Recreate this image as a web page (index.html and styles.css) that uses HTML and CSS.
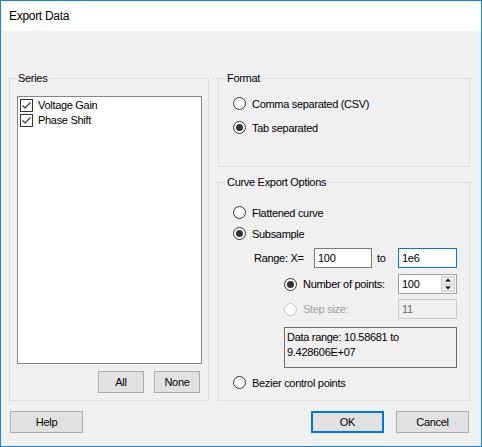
FILE: index.html
```html
<!DOCTYPE html>
<html lang="en">
<head>
    <meta charset="UTF-8">
    <title>Export Data</title>
    <link rel="stylesheet" href="styles.css">
</head>
<body>
<div class="window">
    <div class="titlebar">Export Data</div>

    <div class="content">
        <div class="groups">
            <!-- Series list -->
            <fieldset class="group series">
                <legend>Series</legend>
                <div class="series-body">
                    <div class="listbox">
                        <div class="item">
                            <span class="check"><svg width="11" height="11" viewBox="0 0 11 11"><polyline points="1.5,5.5 4,8 9.5,2.5" fill="none" stroke="#333" stroke-width="1.2"/></svg></span>
                            Voltage Gain
                        </div>
                        <div class="item">
                            <span class="check"><svg width="11" height="11" viewBox="0 0 11 11"><polyline points="1.5,5.5 4,8 9.5,2.5" fill="none" stroke="#333" stroke-width="1.2"/></svg></span>
                            Phase Shift
                        </div>
                    </div>
                    <div class="list-buttons">
                        <button class="btn small">All</button>
                        <button class="btn small">None</button>
                    </div>
                </div>
            </fieldset>

            <div class="right-col">
                <!-- Format -->
                <fieldset class="group format">
                    <legend>Format</legend>
                    <div class="format-body">
                        <div class="radio-row"><span class="radio"></span><span class="rlabel">Comma separated (CSV)</span></div>
                        <div class="radio-row gap8"><span class="radio on"></span><span class="rlabel">Tab separated</span></div>
                    </div>
                </fieldset>

                <!-- Curve export -->
                <fieldset class="group curve">
                    <legend>Curve Export Options</legend>
                    <div class="curve-body">
                        <div class="radio-row"><span class="radio"></span><span class="rlabel">Flattened curve</span></div>
                        <div class="radio-row gap4"><span class="radio on"></span><span class="rlabel">Subsample</span></div>

                        <div class="sub">
                            <div class="range-row">
                                <span class="range-label">Range: X=</span>
                                <input class="textbox narrow" type="text" value="100">
                                <span class="to">to</span>
                                <input class="textbox focused" type="text" value="1e6">
                            </div>

                            <div class="points">
                                <div class="opt-row">
                                    <div class="opt-label"><span class="radio on"></span><span class="rlabel">Number of points:</span></div>
                                    <div class="spin">
                                        <input type="text" value="100">
                                        <div class="spin-buttons">
                                            <span class="spin-btn"><svg width="13" height="8" viewBox="0 0 13 8"><polygon points="3.5,5.5 6.5,2.5 9.5,5.5" fill="#000"/></svg></span>
                                            <span class="spin-btn"><svg width="13" height="8" viewBox="0 0 13 8"><polygon points="3.5,2.5 6.5,5.5 9.5,2.5" fill="#000"/></svg></span>
                                        </div>
                                    </div>
                                </div>
                                <div class="opt-row step">
                                    <div class="opt-label"><span class="radio off"></span><span class="rlabel">Step size:</span></div>
                                    <input class="textbox disabled" type="text" value="11" disabled>
                                </div>
                                <div class="info">Data range: 10.58681 to<br>9.428606E+07</div>
                            </div>
                        </div>

                        <div class="radio-row gap6"><span class="radio"></span><span class="rlabel">Bezier control points</span></div>
                    </div>
                </fieldset>
            </div>
        </div>

        <div class="footer">
            <button class="btn">Help</button>
            <div class="footer-right">
                <button class="btn default">OK</button>
                <button class="btn">Cancel</button>
            </div>
        </div>
    </div>
</div>
</body>
</html>
```

FILE: styles.css
```css
body {
    margin: 0;
    font-family: "Liberation Sans", Arial, sans-serif;
    font-size: 11px;
    letter-spacing: -0.3px;
    color: #000;
    background: #f0f0f0;
}
.window {
    width: 482px;
    height: 447px;
    box-sizing: border-box;
    border: 1px solid #1883d7;
    background: #f0f0f0;
}
.titlebar {
    height: 30px;
    line-height: 30px;
    padding-left: 8px;
    background: #fff;
    font-size: 12px;
}
.content {
    padding: 41px 11px 0 8px;
}
.groups {
    display: grid;
    grid-template-columns: 200px 252px;
    column-gap: 9px;
    height: 329px;
}

/* group boxes */
.group {
    margin: 0;
    padding: 0;
    min-width: 0;
    border: 1px solid #dcdcdc;
    display: flex;
    flex-direction: column;
}
.group legend {
    margin-left: 6px;
    padding: 0 2px;
    height: 13px;
    line-height: 13px;
}

/* series */
.series-body {
    flex: 1;
    display: flex;
    flex-direction: column;
    padding: 11px 6px 7px 7px;
}
.listbox {
    flex: 1;
    background: #fff;
    border: 1px solid #828790;
    padding-top: 1px;
}
.item {
    height: 15px;
    line-height: 15px;
    display: flex;
    align-items: center;
    padding-left: 2px;
}
.check {
    width: 13px;
    height: 13px;
    box-sizing: border-box;
    border: 1px solid #333;
    background: #fff;
    margin-right: 5px;
    display: flex;
}
.list-buttons {
    display: flex;
    justify-content: flex-end;
    gap: 10px;
    margin-top: 7px;
    padding-right: 2px;
}

/* buttons */
.btn {
    width: 73px;
    height: 22px;
    box-sizing: border-box;
    padding: 0;
    border: 1px solid #adadad;
    background: #e1e1e1;
    color: #000;
    font: inherit;
    letter-spacing: inherit;
}
.btn.small {
    width: 46px;
}
.btn.default {
    border: 2px solid #0078d7;
}

/* radios */
.radio-row {
    height: 17px;
    display: flex;
    align-items: center;
}
.gap4 { margin-top: 4px; }
.gap6 { margin-top: 6px; }
.gap8 { margin-top: 7px; }
.radio {
    width: 13px;
    height: 13px;
    box-sizing: border-box;
    border: 1px solid #333;
    border-radius: 50%;
    background: #fff;
    display: flex;
    align-items: center;
    justify-content: center;
    flex: none;
}
.radio.on::after {
    content: "";
    width: 7px;
    height: 7px;
    border-radius: 50%;
    background: #333;
}
.radio.off {
    border-color: #c4c4c4;
    background: #fcfcfc;
}
.rlabel {
    margin-left: 6px;
    white-space: nowrap;
}

/* right column */
.right-col {
    display: flex;
    flex-direction: column;
}
.format {
    height: 93px;
    flex: none;
}
.format-body {
    padding: 10px 0 0 14px;
}
.curve {
    flex: 1;
    margin-top: 9px;
}
.curve-body {
    padding: 15px 0 0 14px;
}
.sub {
    margin-left: 21px;
    margin-top: 6px;
}
.range-row {
    display: flex;
    align-items: center;
    height: 20px;
}
.range-label {
    width: 60px;
}
.to {
    width: 26px;
    padding-left: 5px;
    box-sizing: border-box;
}
.textbox {
    width: 59px;
    height: 20px;
    box-sizing: border-box;
    border: 1px solid #7a7a7a;
    background: #fff;
    padding: 0 3px;
    margin: 0;
    font: inherit;
    letter-spacing: inherit;
    color: #000;
    outline: none;
}
.textbox.narrow {
    width: 58px;
}
.textbox.focused {
    border-color: #0078d7;
}
.textbox.disabled {
    border-color: #cccccc;
    background: #f0f0f0;
    color: #6d6d6d;
}
.points {
    margin-left: 30px;
}
.opt-row {
    display: flex;
    align-items: center;
    height: 20px;
    margin-top: 6px;
}
.opt-row.step {
    margin-top: 5px;
}
.opt-label {
    width: 114px;
    display: flex;
    align-items: center;
}
.step .rlabel {
    color: #a0a0a0;
}
.spin {
    width: 59px;
    height: 20px;
    box-sizing: border-box;
    border: 1px solid #a0a0a0;
    background: #fff;
    display: flex;
}
.spin input {
    flex: 1;
    min-width: 0;
    border: none;
    padding: 0 3px;
    margin: 0;
    font: inherit;
    letter-spacing: inherit;
    outline: none;
    background: #fff;
}
.spin-buttons {
    width: 14px;
    margin: 1px 1px 1px 0;
    display: flex;
    flex-direction: column;
    border: 1px solid #cfcfcf;
    box-sizing: border-box;
}
.spin-btn {
    flex: 1;
    background: #ececec;
    display: flex;
    align-items: center;
    justify-content: center;
    overflow: hidden;
}
.spin-btn + .spin-btn {
    border-top: 1px solid #cfcfcf;
}
.info {
    margin-top: 8px;
    width: 173px;
    height: 41px;
    box-sizing: border-box;
    border: 1px solid #6e6e6e;
    padding: 2px 0 0 2px;
    line-height: 15px;
}

/* bottom buttons */
.footer {
    display: flex;
    justify-content: space-between;
    margin-top: 10px;
    padding: 0 1px;
}
.footer-right {
    display: flex;
    gap: 12px;
}
```
